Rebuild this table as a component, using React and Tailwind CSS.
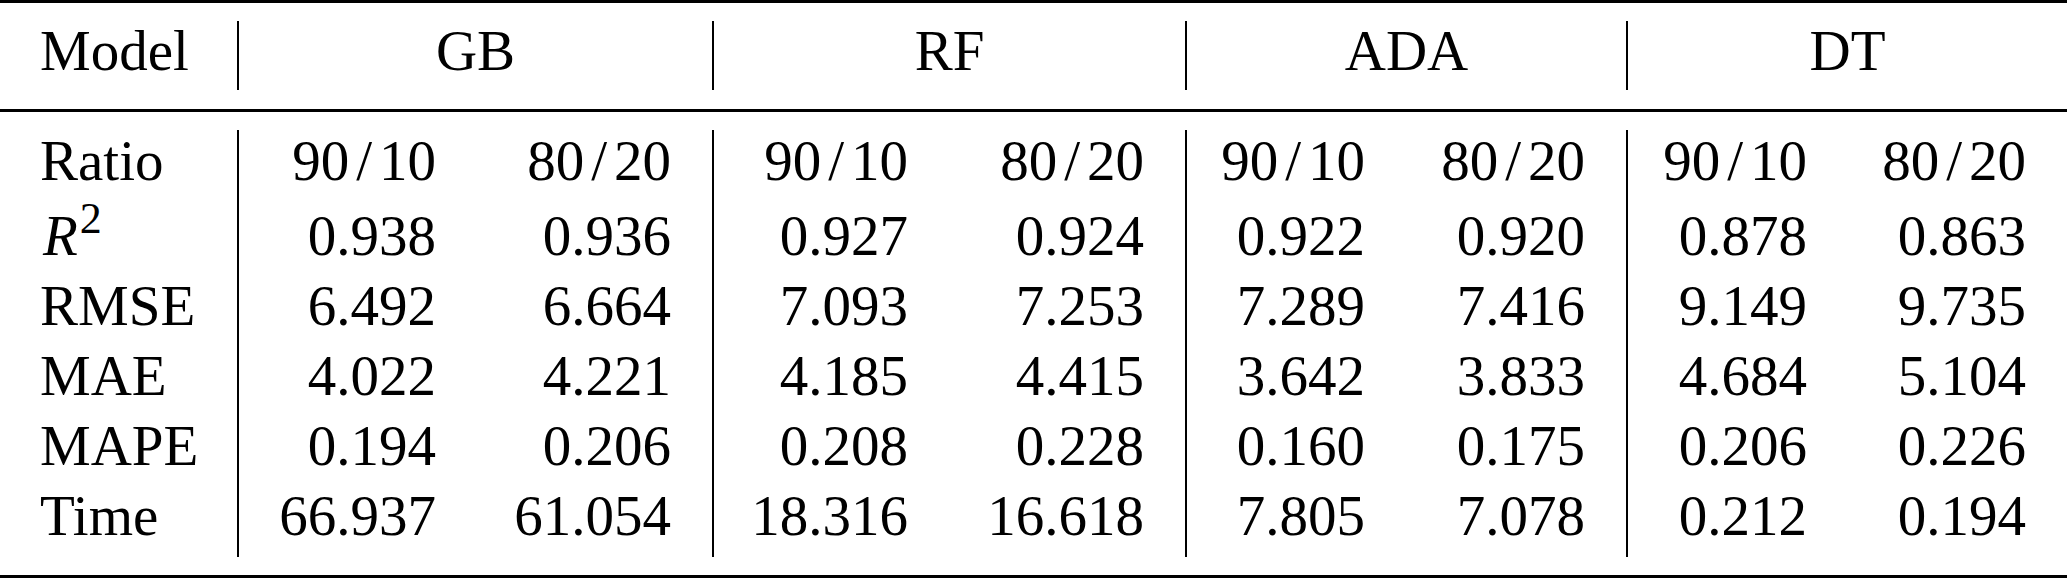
import React from "react";

const groups = ["GB", "RF", "ADA", "DT"];

const rows = [
  { label: "Ratio", values: ["90/10", "80/20", "90/10", "80/20", "90/10", "80/20", "90/10", "80/20"] },
  { label: "R2", values: ["0.938", "0.936", "0.927", "0.924", "0.922", "0.920", "0.878", "0.863"] },
  { label: "RMSE", values: ["6.492", "6.664", "7.093", "7.253", "7.289", "7.416", "9.149", "9.735"] },
  { label: "MAE", values: ["4.022", "4.221", "4.185", "4.415", "3.642", "3.833", "4.684", "5.104"] },
  { label: "MAPE", values: ["0.194", "0.206", "0.208", "0.228", "0.160", "0.175", "0.206", "0.226"] },
  { label: "Time", values: ["66.937", "61.054", "18.316", "16.618", "7.805", "7.078", "0.212", "0.194"] },
];

// row heights taken from the reference (R² row is taller because of the superscript)
const rowHeights = ["h-[70px]", "h-[75px] pt-[5px]", "h-[70px]", "h-[70px]", "h-[70px]", "h-[72px]"];

const cols = "grid grid-cols-[237px_240px_235px_237px_236px_221px_220px_222px_219px]";

// ratios like 90/10 get a bit of room around the slash, as in the typeset original
const Value = ({ v }) => {
  if (!v.includes("/")) return v;
  const [a, b] = v.split("/");
  return (
    <>
      {a}
      <span className="mx-[7px]">/</span>
      {b}
    </>
  );
};

const App = () => {
  return (
    <div
      className="w-[2067px] h-[578px] bg-white text-black text-[57px] overflow-hidden"
      style={{ fontFamily: '"Liberation Serif", "Times New Roman", serif' }}
    >
      <div className="h-[3px] bg-black" />

      {/* header */}
      <div className={`${cols} mt-[18px] h-[69px] leading-[60px]`}>
        <div className="pl-[40px]">Model</div>
        {groups.map((g) => (
          <div key={g} className="col-span-2 border-l-2 border-black text-center">
            {g}
          </div>
        ))}
      </div>

      <div className="mt-[19px] h-[3px] bg-black" />

      {/* body */}
      <div className={`${cols} mt-[18px] leading-[62px]`}>
        {rows.map((row, r) => (
          <React.Fragment key={row.label}>
            <div className={`${rowHeights[r]} pl-[40px]`}>
              {row.label === "R2" ? (
                <span>
                  <span className="italic ml-[3px]">R</span>
                  <span className="relative -top-[22px] ml-[2px] text-[44px]">2</span>
                </span>
              ) : (
                row.label
              )}
            </div>
            {row.values.map((v, i) => (
              <div
                key={i}
                className={`${rowHeights[r]} text-right pr-[41px] ${i % 2 === 0 ? "border-l-2 border-black" : ""}`}
              >
                <Value v={v} />
              </div>
            ))}
          </React.Fragment>
        ))}
      </div>

      <div className="mt-[18px] h-[3px] bg-black" />
    </div>
  );
};

export default App;
